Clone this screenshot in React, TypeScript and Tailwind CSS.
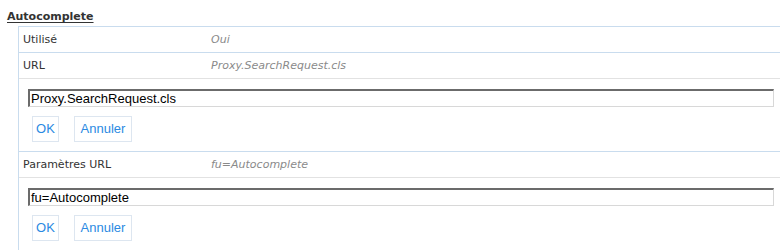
import React from "react";

const verdana = { fontFamily: '"DejaVu Sans", Verdana, sans-serif' };
const arial = { fontFamily: '"Liberation Sans", Arial, sans-serif' };

function Row({ label, value, bottom }: { label: string; value: string; bottom: string }) {
  return (
    <div className={`flex h-[26px] items-center border-b pt-[2px] ${bottom} text-[11px]`} style={verdana}>
      <div className="w-[192px] pl-[4px] text-[#333]">{label}</div>
      <div className="italic text-[#8a8a8a]">{value}</div>
    </div>
  );
}

function Editor({ value }: { value: string }) {
  return (
    <div className="border-b border-[#c9dcee] pl-[9px] pr-[6px] pt-[10px] pb-[9px]">
      <div
        className="h-[18px] border-t-2 border-l-2 border-t-[#6b6b6b] border-l-[#6b6b6b] border-r border-b border-r-[#d8d8d8] border-b-[#d8d8d8] pl-[1px] text-[13px] leading-[15px] text-black"
        style={arial}
      >
        {value}
      </div>
      <div className="mt-[9px] flex gap-[15px] pl-[4px]" style={arial}>
        <button className="h-[26px] w-[27px] border border-[#dde6f0] bg-white text-[13px] text-[#2b8ae2]">OK</button>
        <button className="h-[26px] w-[58px] border border-[#dde6f0] bg-white text-[13px] text-[#2b8ae2]">Annuler</button>
      </div>
    </div>
  );
}

export default function App() {
  return (
    <div className="h-[250px] w-[780px] overflow-hidden bg-white">
      <div className="h-[26px] pl-[7px] pt-[7px] leading-[14px]">
        <span className="text-[11px] font-bold text-[#333] underline underline-offset-[2px]" style={verdana}>
          Autocomplete
        </span>
      </div>
      <div className="ml-[18px] h-[224px] border-l border-t border-[#c9dcee]">
        <Row label="Utilisé" value="Oui" bottom="border-[#c9dcee]" />
        <Row label="URL" value="Proxy.SearchRequest.cls" bottom="border-[#e2e2e2]" />
        <Editor value="Proxy.SearchRequest.cls" />
        <Row label="Paramètres URL" value="fu=Autocomplete" bottom="border-[#e2e2e2]" />
        <Editor value="fu=Autocomplete" />
      </div>
    </div>
  );
}
